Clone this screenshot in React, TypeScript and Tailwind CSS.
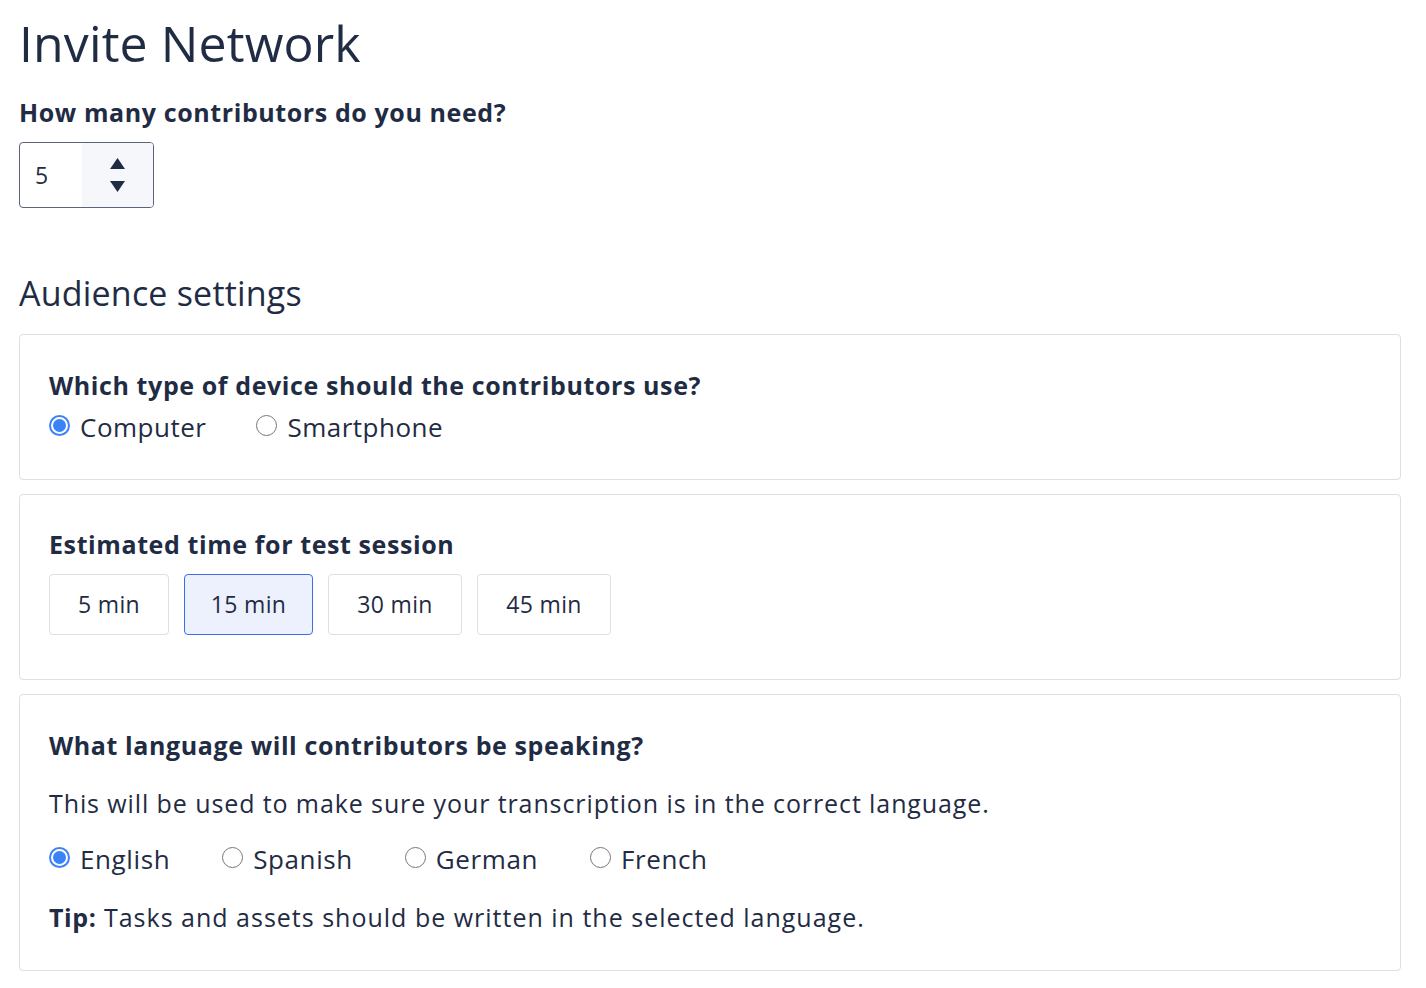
import React, { useState } from "react";

const font = { fontFamily: '"Open Sans", "Liberation Sans", sans-serif' };

function Radio({ checked, label }: { checked: boolean; label: string }) {
  return (
    <label className="flex items-center gap-[10px] cursor-pointer">
      {checked ? (
        <span className="w-[21px] h-[21px] -mt-[4px] rounded-full border-[2px] border-[#3b82f6] flex items-center justify-center bg-white">
          <span className="w-[13px] h-[13px] rounded-full bg-[#3b82f6]" />
        </span>
      ) : (
        <span className="w-[21px] h-[21px] -mt-[4px] rounded-full border-[1.5px] border-[#767676] bg-white" />
      )}
      <span>{label}</span>
    </label>
  );
}

export default function App() {
  const [time] = useState("15 min");
  const times = [
    { t: "5 min", w: "w-[120px]" },
    { t: "15 min", w: "w-[129px]" },
    { t: "30 min", w: "w-[134px]" },
    { t: "45 min", w: "w-[134px]" },
  ];
  return (
    <div style={font} className="min-h-screen bg-white text-[#1f2c44] pl-[19px] pr-[25px] pt-[10px] pb-[20px]">
      <h1 className="text-[50px] leading-[66px] font-normal tracking-[0.1px]">Invite Network</h1>
      <h2 className="text-[25px] leading-[36px] font-bold tracking-[0.6px] mt-[18px]">How many contributors do you need?</h2>
      <div className="mt-[12px] w-[135px] h-[66px] border border-[#5b6578] rounded-[4px] flex overflow-hidden">
        <div className="w-[62px] flex items-center pl-[15px] text-[23px]">5</div>
        <div className="flex-1 bg-[#f5f7fa] flex flex-col items-center justify-center gap-[12px]">
          <svg width="15" height="11" viewBox="0 0 15 11"><path d="M7.5 0 L15 11 L0 11 Z" fill="#1f2c44" /></svg>
          <svg width="15" height="11" viewBox="0 0 15 11"><path d="M0 0 L15 0 L7.5 11 Z" fill="#1f2c44" /></svg>
        </div>
      </div>
      <h3 className="text-[34px] leading-[44px] font-normal mt-[63px] tracking-[0.2px]">Audience settings</h3>
      <div className="mt-[19px] flex flex-col gap-[14px]">
        <section className="border border-[#dcdfe3] rounded-[4px] px-[29px] pt-[32px] pb-[34px]">
          <div className="text-[25px] leading-[36px] font-bold tracking-[0.6px]">Which type of device should the contributors use?</div>
          <div className="flex gap-[50px] text-[26px] leading-[36px] tracking-[0.5px] mt-[6px]">
            <Radio checked label="Computer" />
            <Radio checked={false} label="Smartphone" />
          </div>
        </section>
        <section className="border border-[#dcdfe3] rounded-[4px] px-[29px] pt-[31px] pb-[44px]">
          <div className="text-[25px] leading-[36px] font-bold tracking-[0.6px]">Estimated time for test session</div>
          <div className="flex gap-[15px] mt-[12px]">
            {times.map(({ t, w }) => (
              <button
                key={t}
                className={
                  t === time
                    ? `${w} h-[61px] flex items-center justify-center rounded-[4px] border border-[#3a6fe8] bg-[#edf1fd] text-[23px] tracking-[0.3px]`
                    : `${w} h-[61px] flex items-center justify-center rounded-[4px] border border-[#dcdfe3] bg-white text-[23px] tracking-[0.3px]`
                }
              >
                {t}
              </button>
            ))}
          </div>
        </section>
        <section className="border border-[#dcdfe3] rounded-[4px] px-[29px] pt-[32px] pb-[35px]">
          <div className="text-[25px] leading-[36px] font-bold tracking-[0.6px]">What language will contributors be speaking?</div>
          <p className="text-[25px] leading-[36px] tracking-[0.9px] mt-[22px]">
            This will be used to make sure your transcription is in the correct language.
          </p>
          <div className="flex gap-[52px] text-[26px] leading-[36px] tracking-[0.6px] mt-[20px]">
            <Radio checked label="English" />
            <Radio checked={false} label="Spanish" />
            <Radio checked={false} label="German" />
            <Radio checked={false} label="French" />
          </div>
          <p className="text-[25px] leading-[36px] tracking-[1px] mt-[22px]">
            <span className="font-bold tracking-[0.6px]">Tip:</span> Tasks and assets should be written in the selected language.
          </p>
        </section>
      </div>
    </div>
  );
}
